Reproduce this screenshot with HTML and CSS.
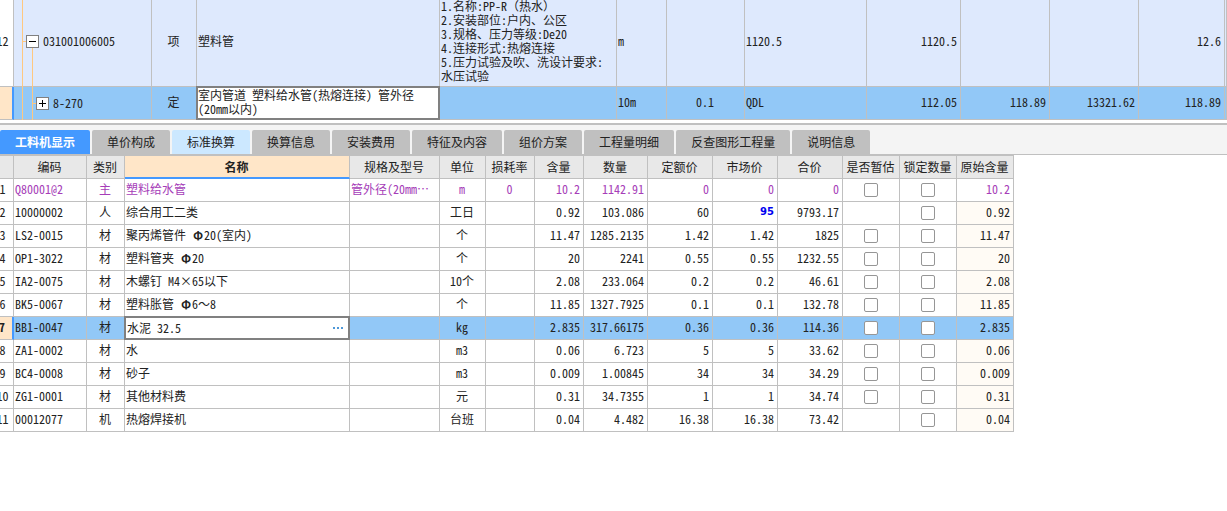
FILE: index.html
```
<!DOCTYPE html>
<html lang="zh-CN">
<head>
<meta charset="utf-8">
<title>工料机显示</title>
<link rel="stylesheet" href="styles.css">
</head>
<body>
<section class="pane pane-top">
<table class="grid bill">
<colgroup><col class="w22"><col class="w138"><col class="w45"><col class="w243"><col class="w177"><col class="w50"><col class="w78"><col class="w122"><col class="w94"><col class="w89"><col class="w89"><col class="w86"><col></colgroup>
<tbody>
<tr class="item">
<td class="no">12</td>
<td class="tree"><span class="guide root"></span><span class="guide child"></span><span class="node"><button class="toggle" type="button" aria-label="折叠"><svg viewBox="0 0 11 11"><path d="M2 5.5H9"/></svg></button>031001006005</span></td>
<td class="c">项</td><td>塑料管</td>
<td class="desc">1.名称:PP-R<span class="full">（</span>热水<span class="full">）</span><br>2.安装部位:户内、公区<br>3.规格、压力等级:De20<br>4.连接形式:热熔连接<br>5.压力试验及吹、洗设计要求:<br>水压试验</td>
<td>m</td><td></td><td>1120.5</td><td class="r">1120.5</td><td></td><td></td><td class="r">12.6</td><td></td>
</tr>
<tr class="quota selected">
<td class="no"></td>
<td class="tree"><span class="guide root"></span><span class="guide second"></span><span class="node nested"><button class="toggle" type="button" aria-label="展开"><svg viewBox="0 0 11 11"><path d="M2 5.5H9M5.5 2V9"/></svg></button>8-270</span></td>
<td class="c">定</td>
<td class="edit"><div class="editor"><textarea aria-label="名称" rows="2">室内管道 塑料给水管(热熔连接) 管外径(20mm以内)</textarea></div></td>
<td></td><td>10m</td><td class="c">0.1</td><td>QDL</td><td class="r">112.05</td><td class="r">118.89</td><td class="r">13321.62</td><td class="r">118.89</td><td></td>
</tr>
</tbody>
</table>
</section>
<nav class="tabs">
<button type="button" class="tab active">工料机显示</button>
<button type="button" class="tab">单价构成</button>
<button type="button" class="tab hint">标准换算</button>
<button type="button" class="tab">换算信息</button>
<button type="button" class="tab">安装费用</button>
<button type="button" class="tab">特征及内容</button>
<button type="button" class="tab">组价方案</button>
<button type="button" class="tab">工程量明细</button>
<button type="button" class="tab">反查图形工程量</button>
<button type="button" class="tab">说明信息</button>
</nav>
<section class="pane">
<table class="grid detail">
<colgroup><col class="w22"><col class="w73"><col class="w38"><col class="w225"><col class="w90"><col class="w46"><col class="w49"><col class="w49"><col class="w64"><col class="w65"><col class="w65"><col class="w65"><col class="w57"><col class="w57"><col class="w57"></colgroup>
<thead>
<tr><th></th><th>编码</th><th>类别</th><th class="current">名称</th><th>规格及型号</th><th>单位</th><th>损耗率</th><th>含量</th><th>数量</th><th>定额价</th><th>市场价</th><th>合价</th><th>是否暂估</th><th>锁定数量</th><th>原始含量</th></tr>
</thead>
<tbody>
<tr class="main"><td class="no">1</td><td>Q80001@2</td><td class="c">主</td><td>塑料给水管</td><td>管外径(20mm…</td><td class="c">m</td><td class="c">0</td><td class="r">10.2</td><td class="r">1142.91</td><td class="r">0</td><td class="r">0</td><td class="r">0</td><td class="check"><input type="checkbox" aria-label="是否暂估"></td><td class="check"><input type="checkbox" aria-label="锁定数量"></td><td class="r">10.2</td></tr>
<tr><td class="no">2</td><td>10000002</td><td class="c">人</td><td>综合用工二类</td><td></td><td class="c">工日</td><td></td><td class="r">0.92</td><td class="r">103.086</td><td class="r">60</td><td class="r changed">95</td><td class="r">9793.17</td><td></td><td class="check"><input type="checkbox" aria-label="锁定数量"></td><td class="r origin">0.92</td></tr>
<tr><td class="no">3</td><td>LS2-0015</td><td class="c">材</td><td>聚丙烯管件 <span class="phi">Φ</span>20(室内)</td><td></td><td class="c">个</td><td></td><td class="r">11.47</td><td class="r">1285.2135</td><td class="r">1.42</td><td class="r">1.42</td><td class="r">1825</td><td class="check"><input type="checkbox" aria-label="是否暂估"></td><td class="check"><input type="checkbox" aria-label="锁定数量"></td><td class="r origin">11.47</td></tr>
<tr><td class="no">4</td><td>OP1-3022</td><td class="c">材</td><td>塑料管夹 <span class="phi">Φ</span>20</td><td></td><td class="c">个</td><td></td><td class="r">20</td><td class="r">2241</td><td class="r">0.55</td><td class="r">0.55</td><td class="r">1232.55</td><td class="check"><input type="checkbox" aria-label="是否暂估"></td><td class="check"><input type="checkbox" aria-label="锁定数量"></td><td class="r origin">20</td></tr>
<tr><td class="no">5</td><td>IA2-0075</td><td class="c">材</td><td>木螺钉 M4×65以下</td><td></td><td class="c">10个</td><td></td><td class="r">2.08</td><td class="r">233.064</td><td class="r">0.2</td><td class="r">0.2</td><td class="r">46.61</td><td class="check"><input type="checkbox" aria-label="是否暂估"></td><td class="check"><input type="checkbox" aria-label="锁定数量"></td><td class="r origin">2.08</td></tr>
<tr><td class="no">6</td><td>BK5-0067</td><td class="c">材</td><td>塑料胀管 <span class="phi">Φ</span>6<span class="full">～</span>8</td><td></td><td class="c">个</td><td></td><td class="r">11.85</td><td class="r">1327.7925</td><td class="r">0.1</td><td class="r">0.1</td><td class="r">132.78</td><td class="check"><input type="checkbox" aria-label="是否暂估"></td><td class="check"><input type="checkbox" aria-label="锁定数量"></td><td class="r origin">11.85</td></tr>
<tr class="selected"><td class="no">7</td><td>BB1-0047</td><td class="c">材</td><td class="edit"><div class="editor"><input type="text" aria-label="名称" value="水泥 32.5"><button class="more" type="button" aria-label="更多"><svg viewBox="0 0 11 2"><path d="M0 0h2v2H0zM4 0h2v2H4zM8 0h2v2H8z"/></svg></button></div></td><td></td><td class="c">kg</td><td></td><td class="r">2.835</td><td class="r">317.66175</td><td class="r">0.36</td><td class="r">0.36</td><td class="r">114.36</td><td class="check"><input type="checkbox" aria-label="是否暂估"></td><td class="check"><input type="checkbox" aria-label="锁定数量"></td><td class="r">2.835</td></tr>
<tr><td class="no">8</td><td>ZA1-0002</td><td class="c">材</td><td>水</td><td></td><td class="c">m3</td><td></td><td class="r">0.06</td><td class="r">6.723</td><td class="r">5</td><td class="r">5</td><td class="r">33.62</td><td class="check"><input type="checkbox" aria-label="是否暂估"></td><td class="check"><input type="checkbox" aria-label="锁定数量"></td><td class="r origin">0.06</td></tr>
<tr><td class="no">9</td><td>BC4-0008</td><td class="c">材</td><td>砂子</td><td></td><td class="c">m3</td><td></td><td class="r">0.009</td><td class="r">1.00845</td><td class="r">34</td><td class="r">34</td><td class="r">34.29</td><td class="check"><input type="checkbox" aria-label="是否暂估"></td><td class="check"><input type="checkbox" aria-label="锁定数量"></td><td class="r origin">0.009</td></tr>
<tr><td class="no">10</td><td>ZG1-0001</td><td class="c">材</td><td>其他材料费</td><td></td><td class="c">元</td><td></td><td class="r">0.31</td><td class="r">34.7355</td><td class="r">1</td><td class="r">1</td><td class="r">34.74</td><td class="check"><input type="checkbox" aria-label="是否暂估"></td><td class="check"><input type="checkbox" aria-label="锁定数量"></td><td class="r origin">0.31</td></tr>
<tr><td class="no">11</td><td>00012077</td><td class="c">机</td><td>热熔焊接机</td><td></td><td class="c">台班</td><td></td><td class="r">0.04</td><td class="r">4.482</td><td class="r">16.38</td><td class="r">16.38</td><td class="r">73.42</td><td></td><td class="check"><input type="checkbox" aria-label="锁定数量"></td><td class="r origin">0.04</td></tr>
</tbody>
</table>
</section>
</body>
</html>
```
FILE: styles.css
```
* { box-sizing: border-box; }
body {
  margin: 0;
  background: #fff;
  color: #222;
  font: 12px/14px "Noto Sans CJK SC", sans-serif;
}
button, input, textarea { font: inherit; color: inherit; margin: 0; }

/* Tables start slightly left of the viewport, as if scrolled */
.pane { overflow: hidden; }
.pane-top { padding-bottom: 3px; }
.grid {
  margin-left: -8px;
  table-layout: fixed;
  border-collapse: separate;
  border-spacing: 0;
  font-feature-settings: "hwid";
}
.full { font-feature-settings: normal; }
.phi { display: inline-block; width: 12px; text-align: center; font-weight: 700; }
.bill { width: calc(100% + 8px); margin-top: -4px; }
.detail { width: 1022px; border-top: 1px solid #c0c0c0; }
.grid td, .grid th {
  padding: 0 3px 0 1px;
  border-right: 1px solid #c0c0c0;
  border-bottom: 1px solid #c0c0c0;
  white-space: nowrap;
  text-align: left;
  vertical-align: middle;
  font-weight: 400;
}
.quota td, .detail td { padding-bottom: 2px; }
.grid td.c, .grid td.no, .grid td.check, .grid th {
  padding-left: 0;
  padding-right: 1px;
  text-align: center;
}
.grid td.no { padding-right: 0; }
.grid td.check { padding-bottom: 0; }
.grid td.r { text-align: right; }
.grid .no { background: #fff; }

.item { height: 91px; background: #dee9fd; }
.quota { height: 33px; }
.selected { background: #92c8f7; }
.grid .selected .no {
  background: #ffe6c8;
  border-right: 2px solid #4499ff;
  font-weight: 700;
}

/* Tree column */
.grid .tree { position: relative; padding: 0; }
.node { display: flex; align-items: center; gap: 4px; padding-left: 12px; }
.nested { padding-left: 22px; }
.toggle {
  position: relative;
  width: 13px;
  height: 13px;
  padding: 0;
  border: 1px solid #808080;
  background: #fff;
}
.toggle::before {
  content: "";
  position: absolute;
  top: 5px;
  left: -4px;
  width: 3px;
  height: 1px;
  background: #ffc880;
}
.toggle svg { display: block; width: 11px; height: 11px; stroke: #000; fill: none; }
.guide { position: absolute; top: 0; bottom: -1px; width: 1px; background: #ffc880; }
.root { left: 8px; }
.child { left: 18px; top: 50%; }
.second { left: 18px; }

/* Cell being edited */
.grid .edit { position: relative; padding: 0; }
.editor {
  position: absolute;
  inset: -1px;
  display: flex;
  align-items: center;
  border: 2px solid #808080;
  background: #fff;
}
.editor textarea, .editor input {
  flex: 1;
  min-width: 0;
  height: 100%;
  padding: 0 0 2px 1px;
  border: 0;
  outline: 0;
  resize: none;
  overflow: hidden;
  background: none;
  font-feature-settings: "hwid";
}
.editor textarea { padding: 0; line-height: 14px; }
.more { padding: 0 4px; border: 0; background: none; }
.more svg { display: block; width: 11px; height: 2px; fill: #4e98d8; }

.tabs {
  display: flex;
  gap: 2px;
  padding-top: 5px;
  border-top: 2px solid #c0c0c0;
  border-bottom: 1px solid #c0c0c0;
  background: #f4f4f4;
}
.tab {
  height: 24px;
  padding: 0 15px;
  border: 0;
  border-radius: 2px 2px 0 0;
  background: #c0c0c0;
  white-space: nowrap;
}
.tab.active { background: #4499ff; color: #fff; font-weight: 700; }
.tab.hint { background: #cce8ff; }

.detail tr { height: 23px; }
.detail th { background: #e8e8e8; }
.detail th.current {
  background: #ffe6c8;
  border-bottom: 2px solid #4499ff;
  font-weight: 700;
}
.main { color: #a63db8; }
.main .no { color: #222; }
.grid .changed {
  color: #0000f0;
  font-family: "DejaVu Sans", sans-serif;
  font-size: 10px;
  font-weight: 700;
}
.origin { background: #fffbf5; }
.detail input[type="checkbox"] {
  appearance: none;
  display: block;
  width: 14px;
  height: 14px;
  margin: 0 auto;
  border: 1px solid #969696;
  border-radius: 2px;
  background: #fff;
}

.w22 { width: 22px; }
.w38 { width: 38px; }
.w45 { width: 45px; }
.w46 { width: 46px; }
.w49 { width: 49px; }
.w50 { width: 50px; }
.w57 { width: 57px; }
.w64 { width: 64px; }
.w65 { width: 65px; }
.w73 { width: 73px; }
.w78 { width: 78px; }
.w86 { width: 86px; }
.w89 { width: 89px; }
.w90 { width: 90px; }
.w94 { width: 94px; }
.w122 { width: 122px; }
.w138 { width: 138px; }
.w177 { width: 177px; }
.w225 { width: 225px; }
.w243 { width: 243px; }
```
